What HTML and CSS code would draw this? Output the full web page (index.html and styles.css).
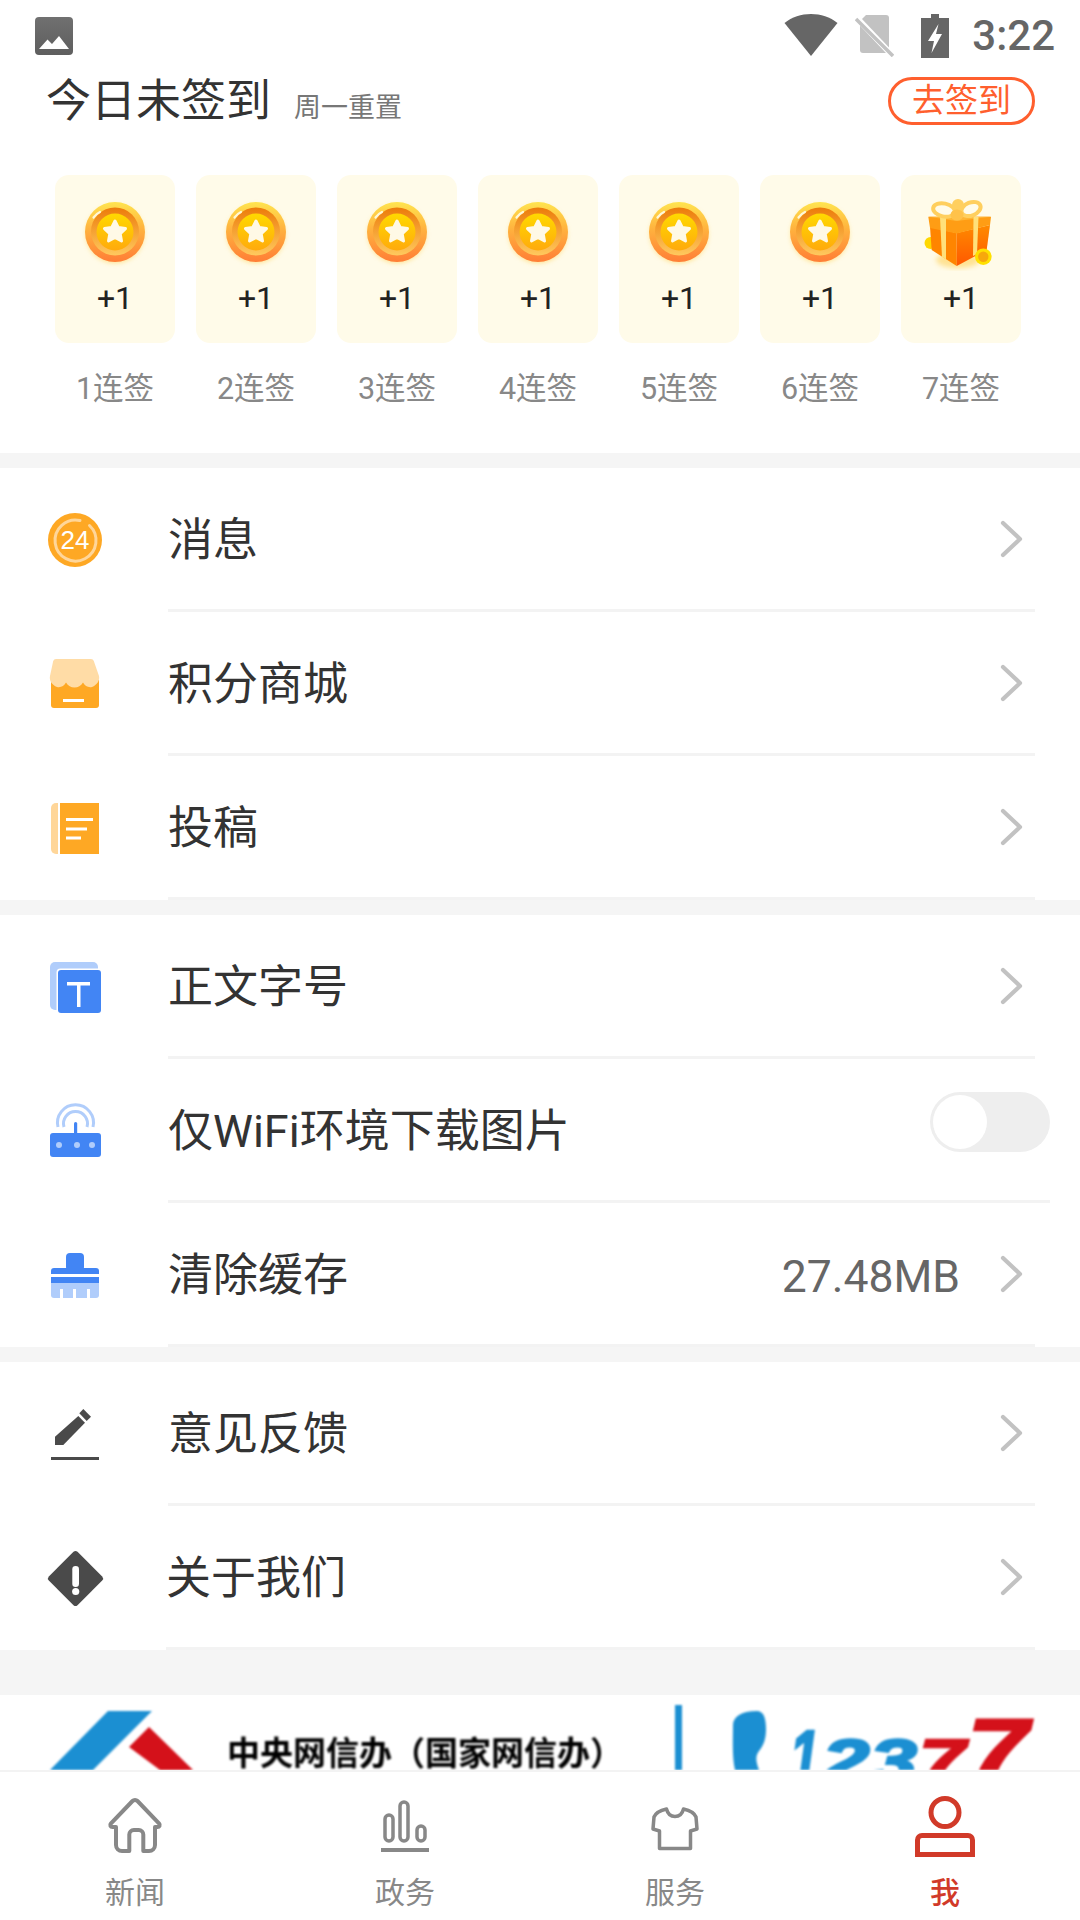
FILE: index.html
```html
<!DOCTYPE html>
<html lang="zh-CN">
<head>
<meta charset="utf-8">
<title>我的</title>
<link rel="stylesheet" href="styles.css">
</head>
<body>
<svg class="sprite" aria-hidden="true">
  <defs>
    <linearGradient id="cOuter" x1="0" y1="0" x2="0" y2="1"><stop offset="0" stop-color="#ffe44f"/><stop offset=".45" stop-color="#ffb23e"/><stop offset="1" stop-color="#ff7e36"/></linearGradient>
    <linearGradient id="cRing" x1="0" y1="0" x2="0" y2="1"><stop offset="0" stop-color="#ec7b0a"/><stop offset="1" stop-color="#ffc95e"/></linearGradient>
    <linearGradient id="cDisc" x1="0" y1="0" x2="0" y2="1"><stop offset="0" stop-color="#ffd900"/><stop offset="1" stop-color="#ffaa0c"/></linearGradient>
    <linearGradient id="gRight" x1="0" y1="0" x2="0" y2="1"><stop offset="0" stop-color="#ff8a00"/><stop offset="1" stop-color="#ff5800"/></linearGradient>
    <linearGradient id="gImg" x1="0" y1="0" x2="0" y2="1"><stop offset="0" stop-color="#707070"/><stop offset="1" stop-color="#5e5e5e"/></linearGradient>
    <filter id="soft" x="-30%" y="-30%" width="160%" height="160%"><feGaussianBlur stdDeviation="2.5"/></filter>
    <symbol id="coin" viewBox="0 0 74 74">
      <circle cx="37" cy="37" r="29" fill="#ffd25a" opacity=".65" filter="url(#soft)"/>
      <circle cx="37" cy="35" r="30" fill="url(#cOuter)"/>
      <circle cx="37" cy="34.5" r="24" fill="url(#cRing)"/>
      <circle cx="37" cy="35" r="18.5" fill="url(#cDisc)"/>
      <polygon points="37,24 40.2,30.5 47.5,31.6 42.2,36.7 43.5,43.9 37,40.5 30.5,43.9 31.8,36.7 26.5,31.6 33.8,30.5" fill="#fff9e6" stroke="#fff9e6" stroke-width="3" stroke-linejoin="round"/>
      <path d="M15.5 20.5c1.8-2.6 4-4.3 6.5-5.5" fill="none" stroke="#fff8d8" stroke-width="2.2" stroke-linecap="round"/>
    </symbol>
    <symbol id="chev" viewBox="0 0 24 38">
      <path d="M4 3 21 19 4 35" fill="none" stroke="#c2c2c2" stroke-width="4.2" stroke-linecap="round" stroke-linejoin="round"/>
    </symbol>
  </defs>
</svg>

<main class="page">
  <section class="checkin">
    <div class="status">
      <svg class="st-img" viewBox="0 0 38 38"><rect width="38" height="38" rx="4" fill="url(#gImg)"/><path d="M4 32 12.500 22.500 17 27 24 19 34 32Z" fill="#fff"/></svg>
      <svg class="st-wifi" viewBox="0 0 54 42"><path d="M.5 9C15-3 39-3 53.500 9L27 42Z" fill="#666"/></svg>
      <svg class="st-sim" viewBox="0 0 39 42"><path d="M11 0H31a3 3 0 0 1 3 3V38H8a3 3 0 0 1-3-3V6Z" fill="#c2c2c2"/><path d="M0 1 37 40" stroke="#fff" stroke-width="6"/><path d="M1 4 38 41" stroke="#c2c2c2" stroke-width="3.500"/></svg>
      <svg class="st-batt" viewBox="0 0 28 44"><path d="M10 0H18V4H28V44H0V4H10Z" fill="#666"/><path d="M17.500 10 7 27H13L10.500 39 21 20H15Z" fill="#fff"/></svg>
      <span class="st-time">3:22</span>
    </div>
    <div class="head">
      <div class="head-left">
        <span class="head-title">今日未签到</span>
        <span class="head-sub">周一重置</span>
      </div>
      <span class="sign-btn">去签到</span>
    </div>
    <div class="days">
      <div class="day"><div class="card"><svg class="reward"><use href="#coin"/></svg><span class="plus">+1</span></div><span class="day-label">1连签</span></div>
      <div class="day"><div class="card"><svg class="reward"><use href="#coin"/></svg><span class="plus">+1</span></div><span class="day-label">2连签</span></div>
      <div class="day"><div class="card"><svg class="reward"><use href="#coin"/></svg><span class="plus">+1</span></div><span class="day-label">3连签</span></div>
      <div class="day"><div class="card"><svg class="reward"><use href="#coin"/></svg><span class="plus">+1</span></div><span class="day-label">4连签</span></div>
      <div class="day"><div class="card"><svg class="reward"><use href="#coin"/></svg><span class="plus">+1</span></div><span class="day-label">5连签</span></div>
      <div class="day"><div class="card"><svg class="reward"><use href="#coin"/></svg><span class="plus">+1</span></div><span class="day-label">6连签</span></div>
      <div class="day"><div class="card">
        <svg class="reward" viewBox="0 0 74 74">
          <ellipse cx="34" cy="63" rx="22" ry="8" fill="#ffd25a" opacity=".6" filter="url(#soft)"/>
          <circle cx="6.500" cy="46" r="6" fill="#ffd800"/>
          <path d="M6 30 32.700 36 32.700 69 7.700 53Z" fill="#ff8500"/>
          <path d="M32.700 36 66 28 62.700 53 32.700 69Z" fill="url(#gRight)"/>
          <path d="M4.300 19.700H67L66 28 32.700 36.500 6 31Z" fill="#ff9d14"/>
          <path d="M4.300 19.700H67L32.700 24Z" fill="#ffb534"/>
          <path d="M16 20H22V62.500L18 60Z" fill="#ffe07a"/>
          <path d="M49.500 20H54.500L53 57 49 59Z" fill="#ffe07a"/>
          <ellipse cx="20" cy="13" rx="11" ry="6.500" fill="none" stroke="#ffcf5e" stroke-width="4" transform="rotate(12 20 13)"/>
          <ellipse cx="47" cy="12" rx="10" ry="6.500" fill="none" stroke="#ffcf5e" stroke-width="4" transform="rotate(-22 47 12)"/>
          <ellipse cx="34" cy="8" rx="6" ry="6" fill="#ffcf5e"/>
          <ellipse cx="33" cy="18" rx="6.500" ry="5.500" fill="#ffc24a"/>
          <circle cx="59.300" cy="59.700" r="8.300" fill="#ffe000"/>
          <circle cx="59.300" cy="59.700" r="5.200" fill="#f7a80c"/>
        </svg>
        <span class="plus">+1</span></div><span class="day-label">7连签</span></div>
    </div>
  </section>

  <section class="group">
    <div class="row">
      <svg class="ico" viewBox="0 0 60 60"><circle cx="30" cy="30" r="27" fill="#fea824"/><path d="M35 10.500A20.500 20.500 0 1 0 44.500 15.500" fill="none" stroke="#ffd699" stroke-width="3" stroke-linecap="round"/><text class="ico-num" x="30" y="39" text-anchor="middle">24</text></svg>
      <div class="row-main"><span class="row-text">消息</span><svg class="chev"><use href="#chev"/></svg></div>
    </div>
    <div class="row">
      <svg class="ico" viewBox="0 0 60 60"><path d="M6 26H54V51a3 3 0 0 1-3 3H9a3 3 0 0 1-3-3Z" fill="#fea824"/><rect x="18" y="45" width="21" height="3" fill="#fff"/><path d="M11 5H46a3 3 0 0 1 2.800 2L54 22c1 4.500-2 9-7 11-4 .8-7-1-9-4.500-2 3.500-5 5-8.500 5s-6.500-1.500-8.500-5c-2 3.500-5 5.300-9 4.500-5-2-8-6.500-7-11L8.200 7A3 3 0 0 1 11 5Z" fill="#ffdca6"/></svg>
      <div class="row-main"><span class="row-text">积分商城</span><svg class="chev"><use href="#chev"/></svg></div>
    </div>
    <div class="row">
      <svg class="ico" viewBox="0 0 60 60"><path d="M13 5V56H11a5 5 0 0 1-5-5V10a5 5 0 0 1 5-5Z" fill="#ffd699"/><rect x="15" y="5" width="39" height="51" fill="#fea824"/><rect x="21" y="20" width="27" height="3" fill="#fff"/><rect x="21" y="29.500" width="21" height="3" fill="#fff"/><rect x="21" y="38.500" width="15" height="3" fill="#fff"/></svg>
      <div class="row-main"><span class="row-text">投稿</span><svg class="chev"><use href="#chev"/></svg></div>
    </div>
  </section>

  <section class="group">
    <div class="row">
      <svg class="ico" viewBox="0 0 60 60"><path d="M10 5H48a5 5 0 0 1 5 5V53H10a5 5 0 0 1-5-5V10a5 5 0 0 1 5-5Z" fill="#b0cdfb"/><rect x="11.500" y="11.500" width="46" height="46" rx="4" fill="#fff"/><rect x="13" y="13" width="43" height="43" rx="3" fill="#4285f4"/><rect x="22" y="25" width="23" height="3.500" fill="#fff"/><rect x="32" y="25" width="3.500" height="25" fill="#fff"/></svg>
      <div class="row-main"><span class="row-text">正文字号</span><svg class="chev"><use href="#chev"/></svg></div>
    </div>
    <div class="row row-wide">
      <svg class="ico" viewBox="0 0 60 60"><path d="M13 26A18 18 0 1 1 48 26M19 26A12 12 0 1 1 42 26" fill="none" stroke="#b0cdfb" stroke-width="3"/><rect x="29" y="21" width="3.200" height="12" rx="1.600" fill="#4285f4"/><rect x="5" y="32" width="51" height="24" rx="3" fill="#4285f4"/><circle cx="14" cy="44" r="3" fill="#b0cdfb"/><circle cx="32" cy="44" r="3" fill="#b0cdfb"/><circle cx="47" cy="44" r="3" fill="#b0cdfb"/></svg>
      <div class="row-main"><span class="row-text">仅WiFi环境下载图片</span><span class="toggle"><span class="knob"></span></span></div>
    </div>
    <div class="row">
      <svg class="ico" viewBox="0 0 60 60"><rect x="21" y="8" width="18" height="18" rx="4" fill="#4285f4"/><path d="M9 23H51a3 3 0 0 1 3 3V29H6V26a3 3 0 0 1 3-3Z" fill="#4285f4"/><rect x="6" y="32" width="48" height="6" fill="#4285f4"/><path d="M6 38H54V50a3 3 0 0 1-3 3H9a3 3 0 0 1-3-3Z" fill="#b0cdfb"/><rect x="15" y="44" width="3" height="9" fill="#fff"/><rect x="28" y="44" width="3" height="9" fill="#fff"/><rect x="42" y="44" width="3" height="9" fill="#fff"/></svg>
      <div class="row-main"><span class="row-text">清除缓存</span><span class="row-value">27.48MB</span><svg class="chev"><use href="#chev"/></svg></div>
    </div>
  </section>

  <section class="group">
    <div class="row">
      <svg class="ico" viewBox="0 0 60 60"><path d="M10 32.700 33.300 12 40 18.700 18.300 41H10Z" fill="#4a4a4a"/><path d="M34.300 9.300 38.300 5 46 12.700 41.700 17Z" fill="#4a4a4a"/><rect x="6" y="53" width="48" height="3" fill="#4a4a4a"/></svg>
      <div class="row-main"><span class="row-text">意见反馈</span><svg class="chev"><use href="#chev"/></svg></div>
    </div>
    <div class="row row-about">
      <svg class="ico" viewBox="0 0 60 60"><path d="M28.500 3.800a3 3 0 0 1 4 0L57.200 28.500a3 3 0 0 1 0 4L32.500 57.200a3 3 0 0 1-4 0L3.800 32.500a3 3 0 0 1 0-4Z" fill="#4a4a4a"/><rect x="27.300" y="18" width="6.700" height="21" rx="3.300" fill="#fff"/><circle cx="30.700" cy="43.500" r="3.600" fill="#fff"/></svg>
      <div class="row-main"><span class="row-text">关于我们</span><svg class="chev"><use href="#chev"/></svg></div>
    </div>
  </section>

  <section class="banner">
    <svg class="banner-art" viewBox="0 1695 1080 75">
      <polygon points="108,1711 152,1711 93,1770 50,1770" fill="#1b8fd2"/>
      <polygon points="149,1727 129,1747 160,1770 193,1770" fill="#d4111a"/>
      <text class="banner-cn" x="227" y="1765">中央网信办（国家网信办）</text>
      <rect x="675" y="1705" width="7" height="65" fill="#1b8fd2"/>
      <path d="M733 1725c0-8 8-14 24-14 6 0 9 6 9 18 0 9-2 16-7 22-4 5-3 11 0 19H735c-3-14-2-30-2-45Z" fill="#1b8fd2"/>
      <text class="banner-num blue" x="790" y="1782" font-size="75" textLength="29" lengthAdjust="spacingAndGlyphs">1</text>
      <text class="banner-num blue" x="822" y="1782" font-size="62" textLength="95" lengthAdjust="spacingAndGlyphs">23</text>
      <text class="banner-num red" x="919" y="1782" font-size="62" textLength="46" lengthAdjust="spacingAndGlyphs">7</text>
      <text class="banner-num red" x="967" y="1782" font-size="90" textLength="61" lengthAdjust="spacingAndGlyphs">7</text>
    </svg>
  </section>

  <nav class="tabs">
    <div class="tab">
      <svg class="tab-ico" viewBox="0 0 60 60"><path d="M11 31H7.500c-2 0-3-2-1.700-3.400L27.500 5a3.500 3.500 0 0 1 5 0L54.200 27.600c1.300 1.400.3 3.400-1.700 3.400H50V49a6 6 0 0 1-6 6H38.300V38.500a4.500 4.500 0 0 0-4.500-4.500h-5a4.500 4.500 0 0 0-4.500 4.500V55H17a6 6 0 0 1-6-6Z" fill="none" stroke="#888" stroke-width="4" stroke-linejoin="round"/></svg>
      <span class="tab-label">新闻</span>
    </div>
    <div class="tab">
      <svg class="tab-ico" viewBox="0 0 60 60"><g fill="none" stroke="#888" stroke-width="3.500"><rect x="10" y="19" width="8" height="26" rx="4"/><rect x="25" y="6" width="8" height="39" rx="4"/><rect x="42" y="30" width="8" height="15" rx="4"/></g><rect x="6" y="52" width="48" height="4" fill="#888"/></svg>
      <span class="tab-label">政务</span>
    </div>
    <div class="tab">
      <svg class="tab-ico" viewBox="0 0 60 60"><path d="M21.500 13C24 23 36 23 38.500 13 43 14 49 16 51 21L52 33 45.500 35V52.500H14.500V35L8 33 9 21C11 16 17 14 21.500 13Z" fill="none" stroke="#888" stroke-width="3.500" stroke-linejoin="round"/></svg>
      <span class="tab-label">服务</span>
    </div>
    <div class="tab tab-on">
      <svg class="tab-ico" viewBox="0 0 60 60"><circle cx="30" cy="16.500" r="14" fill="none" stroke="#d13a29" stroke-width="5"/><path d="M7 39.500H53a4.500 4.500 0 0 1 4.500 4.500V58.500H2.500V44A4.500 4.500 0 0 1 7 39.500Z" fill="none" stroke="#d13a29" stroke-width="5"/></svg>
      <span class="tab-label">我</span>
    </div>
  </nav>
</main>
</body>
</html>
```

FILE: styles.css
```css
* { box-sizing: border-box; }

html, body {
  margin: 0;
  padding: 0;
  width: 1080px;
  height: 1920px;
  overflow: hidden;
  background: #f5f5f5;
}

body {
  font-family: Roboto, "Noto Sans CJK SC", sans-serif;
  color: #333;
}

.sprite {
  display: block;
  width: 0;
  height: 0;
}

.page {
  display: flex;
  flex-direction: column;
  height: 1920px;
}

/* top block */
.checkin {
  background: #fff;
  padding-bottom: 44px;
}

.status {
  display: flex;
  align-items: center;
  height: 72px;
  padding: 0 25px 0 35px;
}

.st-img { width: 38px; height: 38px; }
.st-wifi { width: 54px; height: 42px; margin-left: auto; margin-top: -2px; transform: translateX(2px); }
.st-sim { width: 39px; height: 42px; margin-left: 19px; }
.st-batt { width: 28px; height: 44px; margin-left: 27px; }

.st-time {
  margin-left: 23px;
  font-size: 42px;
  font-weight: 500;
  line-height: 48px;
  color: #666;
}

.head {
  display: flex;
  justify-content: space-between;
  align-items: flex-start;
  height: 53px;
  padding: 5px 45px 0 46px;
}

.head-left {
  display: flex;
  align-items: baseline;
  gap: 23px;
}

.head-title {
  font-size: 45px;
  line-height: 50px;
  color: #333;
}

.head-sub {
  font-size: 27px;
  line-height: 36px;
  color: #777;
}

.sign-btn {
  display: flex;
  align-items: center;
  justify-content: center;
  width: 147px;
  height: 48px;
  border: 3px solid #ff5f2e;
  border-radius: 24px;
  font-size: 33px;
  line-height: 40px;
  color: #ff5f2e;
}

.days {
  display: flex;
  gap: 21px;
  margin-top: 50px;
  padding-left: 55px;
}

.day {
  display: flex;
  flex-direction: column;
  align-items: center;
  width: 120px;
}

.card {
  display: flex;
  flex-direction: column;
  align-items: center;
  width: 120px;
  height: 168px;
  padding-top: 22px;
  border-radius: 14px;
  background: #fffbe9;
}

.reward {
  display: block;
  width: 74px;
  height: 74px;
  flex: none;
}

.plus {
  margin-top: 8px;
  font-size: 32px;
  line-height: 38px;
  color: #222;
}

.day-label {
  margin-top: 26px;
  font-size: 30.5px;
  line-height: 40px;
  color: #888;
}

/* list groups */
.group {
  margin-top: 15px;
  background: #fff;
}

.row {
  display: flex;
  align-items: stretch;
  height: 144px;
  padding: 0 45px;
}

.row-wide { padding-right: 30px; }

.ico {
  align-self: center;
  width: 60px;
  height: 60px;
  margin-right: 63px;
  flex: none;
}

.row-about .ico { margin-right: 61px; }

.ico-num {
  font-family: "Liberation Sans", sans-serif;
  font-size: 26px;
  fill: #fff;
}

.row-main {
  flex: 1;
  display: flex;
  align-items: center;
  padding-top: 3px;
  border-bottom: 3px solid #f3f3f3;
}

.row-text {
  flex: 1;
  margin-top: 2px;
  font-size: 45px;
  line-height: 60px;
  color: #333;
}

.row-value {
  margin-top: 3px;
  margin-right: 39px;
  font-size: 44.5px;
  color: #666;
}

.chev {
  width: 24px;
  height: 38px;
  margin-bottom: 2px;
  margin-right: 12px;
  flex: none;
}

.toggle {
  display: block;
  width: 120px;
  height: 60px;
  margin-bottom: 18px;
  padding: 3px;
  border-radius: 30px;
  background: #eee;
}

.knob {
  display: block;
  width: 54px;
  height: 54px;
  border-radius: 50%;
  background: #fff;
}

/* banner */
.banner {
  margin-top: 45px;
  height: 75px;
  background: #fff;
  overflow: hidden;
}

.banner-art {
  display: block;
  width: 1080px;
  height: 75px;
  filter: blur(0.8px);
}

.banner-cn {
  font-family: "Noto Sans CJK SC", sans-serif;
  font-size: 33px;
  font-weight: 700;
  fill: #000;
}

.banner-num {
  font-family: "Liberation Sans", sans-serif;
  font-weight: 700;
  font-style: italic;
  stroke-width: 2.5px;
}

.blue { fill: #1b8fd2; stroke: #1b8fd2; }
.red { fill: #d4111a; stroke: #d4111a; }

/* tabs */
.tabs {
  display: grid;
  grid-template-columns: repeat(4, 270px);
  height: 150px;
  padding-top: 24px;
  border-top: 2px solid #f3f3f3;
  background: #fff;
}

.tab {
  display: flex;
  flex-direction: column;
  align-items: center;
}

.tab-ico {
  width: 60px;
  height: 60px;
  overflow: visible;
}

.tab-label {
  margin-top: 17px;
  font-size: 30px;
  line-height: 40px;
  color: #888;
}

.tab-on .tab-label {
  color: #d13a29;
  font-weight: 500;
}
```
